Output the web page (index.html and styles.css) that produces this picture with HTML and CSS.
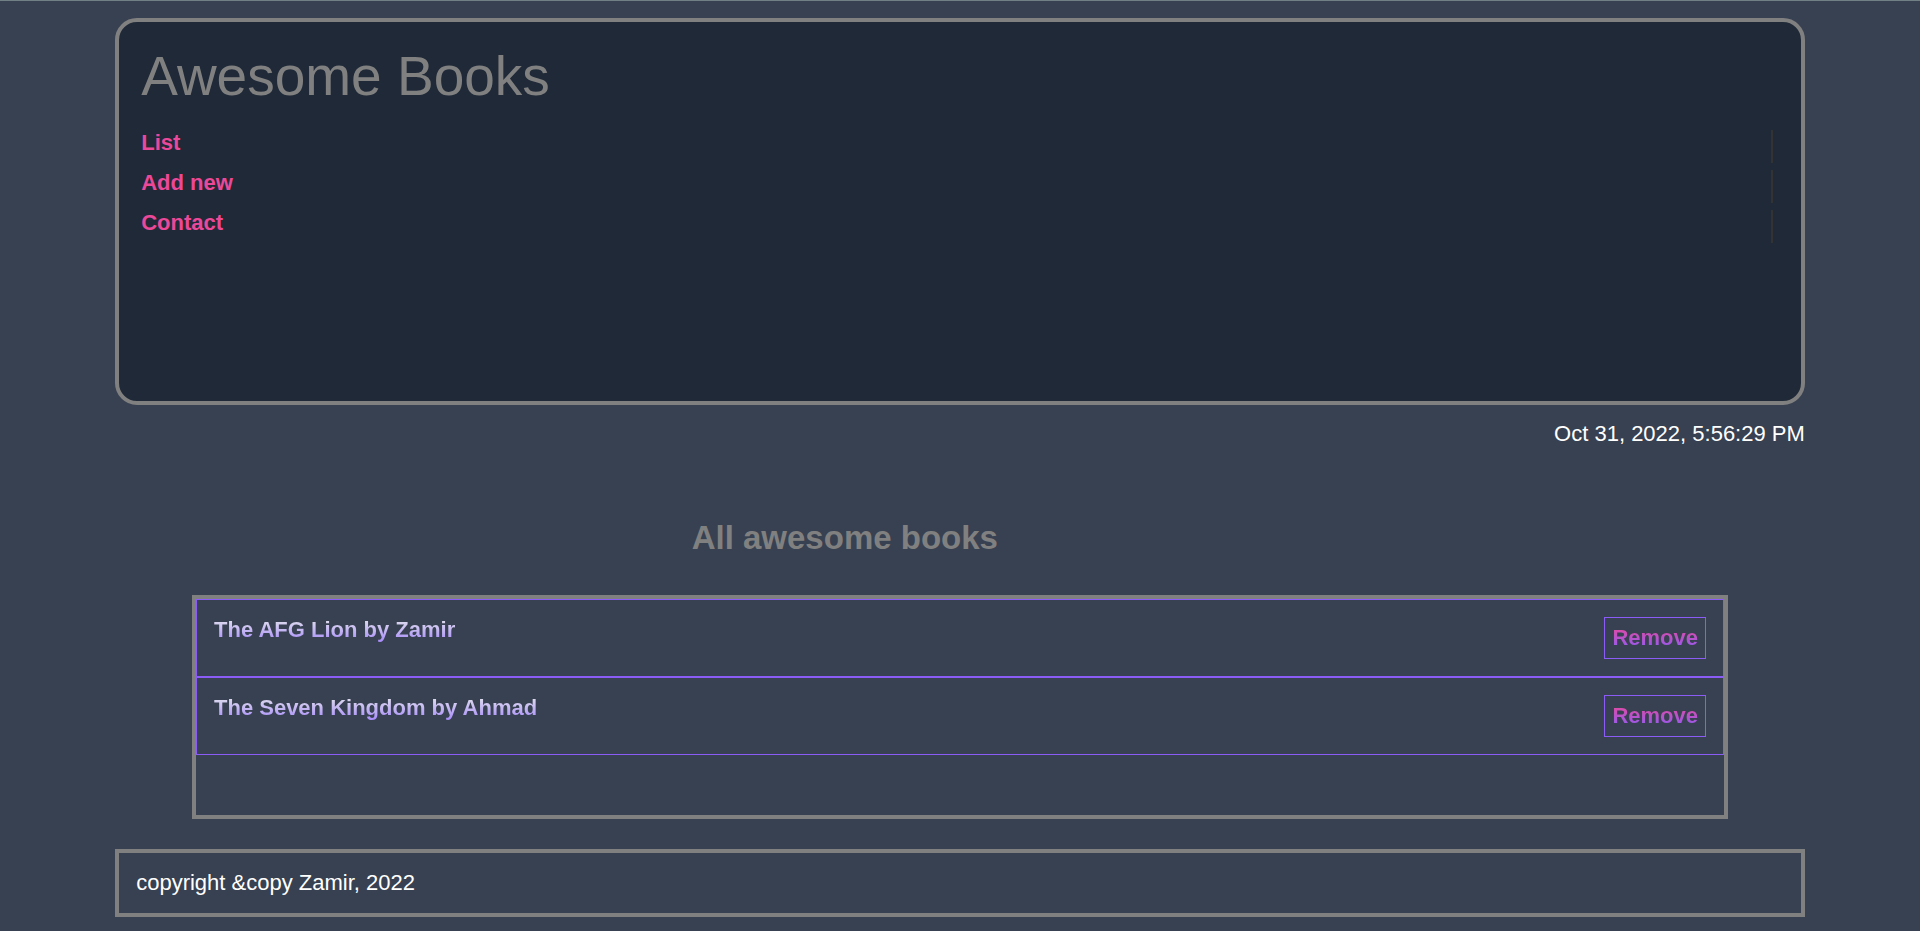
FILE: index.html
```html
<!DOCTYPE html>
<html lang="en">
<head>
<meta charset="utf-8">
<title>Awesome Books</title>
<link rel="stylesheet" href="styles.css">
</head>
<body>
<header class="header">
  <h1 class="title">Awesome Books</h1>
  <nav>
    <ul class="nav-list">
      <li class="nav-item"><a class="nav-link" href="#list">List</a></li>
      <li class="nav-item"><a class="nav-link" href="#add">Add new</a></li>
      <li class="nav-item"><a class="nav-link" href="#contact">Contact</a></li>
    </ul>
  </nav>
</header>
<p class="date">Oct 31, 2022, 5:56:29 PM</p>
<main id="list">
  <h2 class="heading">All awesome books</h2>
  <ul class="books">
    <li class="book">
      <span class="book-name">The AFG Lion by Zamir</span>
      <button class="remove" type="button"><span class="remove-text">Remove</span></button>
    </li>
    <li class="book">
      <span class="book-name">The Seven Kingdom by Ahmad</span>
      <button class="remove" type="button"><span class="remove-text">Remove</span></button>
    </li>
  </ul>
</main>
<footer class="footer">copyright &amp;copy Zamir, 2022</footer>
</body>
</html>
```
FILE: styles.css
```css
* {
  box-sizing: border-box;
  margin: 0;
  padding: 0;
}

body {
  min-height: 100vh;
  border-top: 1px solid #708085;
  background: #384151;
  color: #fff;
  font: 22px/33px Arial, "Liberation Sans", sans-serif;
}

.header {
  min-height: 387px;
  margin: 17px 6% 0;
  padding: 22px;
  border: 4px solid #808080;
  border-radius: 22px;
  background: #1f2937;
}

.title {
  margin-bottom: 22px;
  color: #808080;
  font-size: 55px;
  font-weight: 400;
  line-height: 64px;
}

.nav-list {
  display: grid;
  gap: 7px;
  list-style: none;
}

.nav-item {
  margin-right: 6px;
  padding-bottom: 8px;
  border-right: 2px solid #333;
  line-height: 25px;
}

.nav-link {
  color: #ec4899;
  font-weight: 700;
  text-decoration: none;
}

.date {
  margin: 12px 6% 0;
  text-align: right;
}

.heading {
  width: 88%;
  margin-top: 66px;
  color: #808080;
  font-size: 33px;
  line-height: 44px;
  text-align: center;
}

.books {
  min-height: 224px;
  margin: 35px 10% 30px;
  border: 4px solid #808080;
  list-style: none;
}

.book {
  display: flex;
  align-items: flex-start;
  justify-content: space-between;
  padding: 17px;
  border: 1px solid #8b5cf6;
}

.book-name {
  background: linear-gradient(#e5e7eb, #a78bfa);
  background-clip: text;
  color: transparent;
  font-weight: 700;
  line-height: 25px;
}

.remove {
  padding: 4px 7px;
  border: 1px solid #8b5cf6;
  background: none;
  font: inherit;
  font-weight: 700;
  line-height: 32px;
}

.remove-text {
  background: linear-gradient(#ec4899, #8b5cf6);
  background-clip: text;
  color: transparent;
}

.footer {
  margin: 0 6%;
  padding: 13px 17px 14px;
  border: 4px solid #808080;
}
```
